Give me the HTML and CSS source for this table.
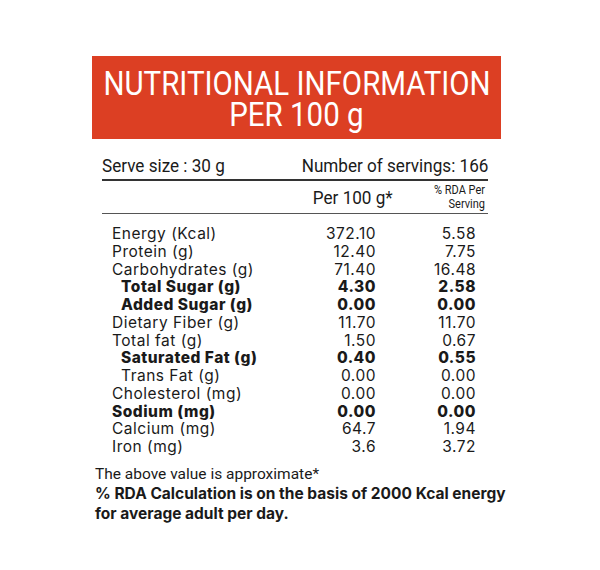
FILE: index.html
```html
<!DOCTYPE html>
<html>
<head>
<meta charset="utf-8">
<link rel="stylesheet" href="styles.css">
</head>
<body>
<div class="panel">
  <div class="banner">
    <div class="banner-line">NUTRITIONAL INFORMATION</div>
    <div class="banner-line">PER 100 g</div>
  </div>
  <div class="serve-row">
    <span class="cond">Serve size : 30 g</span>
    <span class="cond">Number of servings: 166</span>
  </div>
  <div class="col-head">
    <span class="cond per">Per 100 g*</span>
    <span class="cond rda">% RDA Per<br>Serving</span>
  </div>
  <div class="rows">
    <div class="row"><span class="name">Energy (Kcal)</span><span class="v1">372.10</span><span class="v2">5.58</span></div>
    <div class="row"><span class="name">Protein (g)</span><span class="v1">12.40</span><span class="v2">7.75</span></div>
    <div class="row"><span class="name">Carbohydrates (g)</span><span class="v1">71.40</span><span class="v2">16.48</span></div>
    <div class="row bold"><span class="name sub">Total Sugar (g)</span><span class="v1">4.30</span><span class="v2">2.58</span></div>
    <div class="row bold"><span class="name sub">Added Sugar (g)</span><span class="v1">0.00</span><span class="v2">0.00</span></div>
    <div class="row"><span class="name">Dietary Fiber (g)</span><span class="v1">11.70</span><span class="v2">11.70</span></div>
    <div class="row"><span class="name">Total fat (g)</span><span class="v1">1.50</span><span class="v2">0.67</span></div>
    <div class="row bold"><span class="name sub">Saturated Fat (g)</span><span class="v1">0.40</span><span class="v2">0.55</span></div>
    <div class="row"><span class="name sub">Trans Fat (g)</span><span class="v1">0.00</span><span class="v2">0.00</span></div>
    <div class="row"><span class="name">Cholesterol (mg)</span><span class="v1">0.00</span><span class="v2">0.00</span></div>
    <div class="row bold"><span class="name">Sodium (mg)</span><span class="v1">0.00</span><span class="v2">0.00</span></div>
    <div class="row"><span class="name">Calcium (mg)</span><span class="v1">64.7</span><span class="v2">1.94</span></div>
    <div class="row"><span class="name">Iron (mg)</span><span class="v1">3.6</span><span class="v2">3.72</span></div>
  </div>
  <div class="notes">
    <p class="note">The above value is approximate*</p>
    <p class="note strong">% RDA Calculation is on the basis of 2000 Kcal energy<br>for average adult per day.</p>
  </div>
</div>
</body>
</html>
```
FILE: styles.css
```css
* { box-sizing: border-box; }
html, body { margin: 0; padding: 0; background: #fff; }
body { width: 600px; height: 570px; color: #1a1a1a; }
.panel {
  padding: 56px 0 0 92px;
  width: 600px;
}
.banner {
  width: 409px;
  height: 83px;
  background: #dc3f23;
  color: #fff;
  display: flex;
  flex-direction: column;
  align-items: center;
  justify-content: center;
  font-family: Roboto, sans-serif;
  font-size: 33.5px;
  line-height: 31px;
  padding-top: 2px;
}
.banner-line { transform: scaleX(0.88); white-space: nowrap; }
.cond {
  font-family: Roboto, sans-serif;
  display: inline-block;
  white-space: nowrap;
}
.serve-row {
  margin: 16px 0 0 10px;
  width: 386px;
  display: flex;
  justify-content: space-between;
  align-items: flex-end;
  font-size: 19px;
  line-height: 22px;
  padding-bottom: 2px;
  border-bottom: 2px solid #333;
}
.serve-row .cond:first-child { transform: scaleX(0.9); transform-origin: left; }
.serve-row .cond:last-child { transform: scaleX(0.9); transform-origin: right; }
.col-head {
  margin-left: 10px;
  width: 386px;
  height: 33px;
  display: flex;
  justify-content: flex-end;
  align-items: center;
  border-bottom: 1px solid #555;
}
.per { font-size: 19px; transform: scaleX(0.9); transform-origin: right; margin-right: 34px; }
.rda { font-size: 12.5px; line-height: 14.5px; text-align: right; transform: scaleX(0.88); transform-origin: right; margin-right: 3px; }
.rows {
  margin: 11px 0 0 20px;
  width: 364px;
  font-family: Inter, sans-serif;
  font-size: 15.5px;
  letter-spacing: 0.5px;
}
.row {
  display: grid;
  grid-template-columns: 1fr 78px 100px;
  line-height: 17.75px;
  height: 17.75px;
}
.row.bold { font-weight: 800; }
.name.sub { padding-left: 9px; }
.v1, .v2 { text-align: right; }
.notes {
  margin: 8px 0 0 3px;
}
.note { margin: 0; line-height: 20px; }
.note:first-child { font-family: Roboto, sans-serif; font-size: 15.5px; }
.note.strong { font-family: Inter, sans-serif; font-weight: 700; font-size: 15.5px; }
```
